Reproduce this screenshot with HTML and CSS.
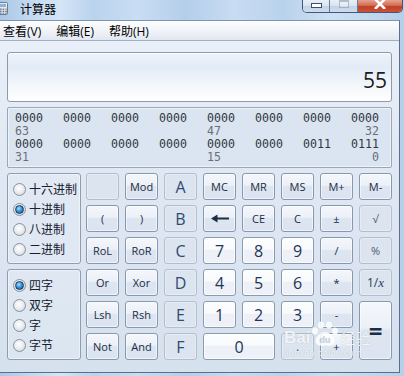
FILE: index.html
```html
<!DOCTYPE html>
<html lang="zh-CN">
<head>
<meta charset="utf-8">
<title>计算器</title>
<link rel="stylesheet" href="styles.css">
</head>
<body>
<div class="window">
  <div class="titlebar">
    <svg class="app-icon" width="8" height="13" viewBox="0 0 8 13">
      <rect x="-4.5" y="0.5" width="12" height="12" rx="1" fill="#e4eaf1" stroke="#6c7d92"/>
      <rect x="-2" y="2" width="8" height="3" fill="#8fb3d9"/>
      <rect x="0" y="6.5" width="1.6" height="1.4" fill="#6f7f93"/>
      <rect x="2.6" y="6.5" width="1.6" height="1.4" fill="#6f7f93"/>
      <rect x="5.2" y="6.5" width="1.6" height="1.4" fill="#e08a3a"/>
      <rect x="0" y="8.6" width="1.6" height="1.4" fill="#6f7f93"/>
      <rect x="2.6" y="8.6" width="1.6" height="1.4" fill="#6f7f93"/>
      <rect x="5.2" y="8.6" width="1.6" height="1.4" fill="#6f7f93"/>
      <rect x="0" y="10.6" width="1.6" height="1.2" fill="#6f7f93"/>
      <rect x="2.6" y="10.6" width="1.6" height="1.2" fill="#6f7f93"/>
      <rect x="5.2" y="10.6" width="1.6" height="1.2" fill="#6f7f93"/>
    </svg>
    <span class="title">计算器</span>
    <div class="caption">
      <div class="cap cap-min"><span class="min-glyph"></span></div>
      <div class="cap cap-max"><span class="max-glyph"></span></div>
      <div class="cap cap-close">
        <svg width="12" height="9" viewBox="0 0 12 9"><path d="M1 -1 L11 9 M11 -1 L1 9" stroke="#fff" stroke-width="2.6" fill="none"/></svg>
      </div>
    </div>
  </div>

  <div class="client">
    <div class="menubar">
      <span class="menu-item">查看(V)</span>
      <span class="menu-item">编辑(E)</span>
      <span class="menu-item">帮助(H)</span>
    </div>

    <div class="display"><span class="value">55</span></div>

    <div class="bits">
      <span>0000</span><span>0000</span><span>0000</span><span>0000</span><span>0000</span><span>0000</span><span>0000</span><span>0000</span>
      <span class="pos">63</span><span class="pos c5">47</span><span class="pos c8">32</span>
      <span>0000</span><span>0000</span><span>0000</span><span>0000</span><span>0000</span><span>0000</span><span>0011</span><span>0111</span>
      <span class="pos">31</span><span class="pos c5">15</span><span class="pos c8">0</span>
    </div>

    <div class="keypad">
      <div class="groups">
        <div class="group">
          <div class="radio-row"><span class="radio"></span><span class="radio-label">十六进制</span></div>
          <div class="radio-row"><span class="radio checked"></span><span class="radio-label">十进制</span></div>
          <div class="radio-row"><span class="radio"></span><span class="radio-label">八进制</span></div>
          <div class="radio-row"><span class="radio"></span><span class="radio-label">二进制</span></div>
        </div>
        <div class="group">
          <div class="radio-row"><span class="radio checked"></span><span class="radio-label">四字</span></div>
          <div class="radio-row"><span class="radio"></span><span class="radio-label">双字</span></div>
          <div class="radio-row"><span class="radio"></span><span class="radio-label">字</span></div>
          <div class="radio-row"><span class="radio"></span><span class="radio-label">字节</span></div>
        </div>
      </div>

      <div class="keys">
        <div class="k dis"></div>
        <div class="k fn">Mod</div>
        <div class="k dis hex">A</div>
        <div class="k fn">MC</div>
        <div class="k fn">MR</div>
        <div class="k fn">MS</div>
        <div class="k fn">M+</div>
        <div class="k fn">M-</div>

        <div class="k fn">(</div>
        <div class="k fn">)</div>
        <div class="k dis hex">B</div>
        <div class="k fn"><svg class="back" width="18" height="9" viewBox="0 0 18 9"><path d="M0 4.5 L6.5 0.5 V3.4 H18 V5.6 H6.5 V8.5 Z" fill="#1c2d45"/></svg></div>
        <div class="k fn">CE</div>
        <div class="k fn">C</div>
        <div class="k fn">±</div>
        <div class="k dis sm">√</div>

        <div class="k fn">RoL</div>
        <div class="k fn">RoR</div>
        <div class="k dis hex">C</div>
        <div class="k num">7</div>
        <div class="k num">8</div>
        <div class="k num">9</div>
        <div class="k fn">/</div>
        <div class="k dis sm">%</div>

        <div class="k fn">Or</div>
        <div class="k fn">Xor</div>
        <div class="k dis hex">D</div>
        <div class="k num">4</div>
        <div class="k num">5</div>
        <div class="k num">6</div>
        <div class="k fn">*</div>
        <div class="k dis inv">1/<i>x</i></div>

        <div class="k fn">Lsh</div>
        <div class="k fn">Rsh</div>
        <div class="k dis hex">E</div>
        <div class="k num">1</div>
        <div class="k num">2</div>
        <div class="k num">3</div>
        <div class="k fn">-</div>
        <div class="k fn eq">=</div>

        <div class="k fn">Not</div>
        <div class="k fn">And</div>
        <div class="k dis hex">F</div>
        <div class="k num zero">0</div>
        <div class="k dis dot">.</div>
        <div class="k fn">+</div>
      </div>
    </div>
  </div>

  <div class="watermark" aria-hidden="true">
    <div class="wm-line">
      <span class="wm-bai">Bai</span>
      <svg class="wm-paw" width="28" height="26" viewBox="0 0 28 26">
        <ellipse cx="4" cy="10" rx="3" ry="3.6" fill="#fff"/>
        <ellipse cx="10" cy="4" rx="3" ry="3.6" fill="#fff"/>
        <ellipse cx="18" cy="4" rx="3" ry="3.6" fill="#fff"/>
        <ellipse cx="24" cy="10" rx="3" ry="3.6" fill="#fff"/>
        <path d="M14 11 C8 11 3 18 5 22 C7 26 12 24 14 24 C16 24 21 26 23 22 C25 18 20 11 14 11Z" fill="#fff"/>
        <text x="14" y="22" text-anchor="middle" font-family="Liberation Sans" font-weight="bold" font-size="9" fill="#c9d4e2">du</text>
      </svg>
      <span class="wm-jy">经验</span>
    </div>
    <div class="wm-url">jingyan.baidu.com</div>
  </div>
</div>
</body>
</html>
```
FILE: styles.css
```css
* { box-sizing: border-box; margin: 0; padding: 0; }
html, body { width: 404px; height: 376px; overflow: hidden; }
body { font-family: "Open Sans", "Noto Sans CJK SC", sans-serif; }

.window {
  position: relative;
  width: 404px;
  height: 376px;
  overflow: hidden;
  background: linear-gradient(90deg, #a9c7e7 0%, #c4daf1 8%, #d4e5f7 15%, #bad3ed 23%, #c9ddf3 34%, #b4ceea 46%, #c8dcf2 58%, #b9d2ec 70%, #cde0f4 82%, #b6cfe9 100%);
}

/* title bar */
.titlebar { height: 20px; display: flex; align-items: flex-start; }
.app-icon { flex: none; margin-top: 2px; }
.title {
  margin-left: 12px;
  margin-top: 1px;
  font-family: "Noto Sans CJK SC", sans-serif;
  font-size: 12px;
  line-height: 16px;
  color: #000;
}
.caption {
  margin-left: auto;
  margin-right: 1px;
  display: flex;
  height: 13px;
  border: 1px solid #42577a;
  border-top: none;
  border-radius: 0 0 5px 5px;
  overflow: hidden;
}
.cap { height: 12px; display: flex; align-items: center; justify-content: center; }
.cap-min, .cap-max {
  width: 28px;
  border-right: 1px solid #6a7e9b;
  background: linear-gradient(#e9eff7 0%, #d8e3f0 50%, #c3d3e6 51%, #cfdcec 100%);
}
.cap-min { width: 27px; }
.cap-close {
  width: 44px;
  background: linear-gradient(#e4a390 0%, #d46b54 45%, #c23d25 55%, #c9533a 100%);
}
.cap-close svg { margin-top: -4px; }
.min-glyph {
  width: 11px; height: 5px;
  margin-top: -1px;
  background: #fff;
  border: 1px solid #3c4f6b;
}
.max-glyph {
  width: 10px; height: 8px;
  margin-top: -5px;
  border: 1px solid rgba(70, 90, 120, 0.35);
  border-top-width: 2px;
  background: rgba(255, 255, 255, 0.25);
}

/* client area */
.client {
  width: 400px;
  height: 353px;
  border-top: 1px solid #8194ad;
  border-right: 1px solid #5d6e87;
  border-bottom: 1px solid #5d6e87;
  background: linear-gradient(#ebf1f9 0%, #e0e8f3 40%, #d6e1ee 100%);
}

.menubar {
  height: 20px;
  border-bottom: 1px solid #a3afbf;
  background: linear-gradient(#fcfdfe 0%, #f1f4f9 50%, #e1e7f1 100%);
  display: flex;
  gap: 15px;
  padding-left: 3px;
  padding-top: 3px;
}
.menu-item { font-size: 12px; line-height: 16px; color: #000; }

.display {
  width: 385px;
  height: 50px;
  margin: 11px 0 0 7px;
  border: 1px solid #8d9aab;
  border-radius: 3px;
  background: linear-gradient(#eef3fa 0%, #e2ebf6 30%, #f2f6fb 65%, #ffffff 100%);
  box-shadow: inset 0 1px 0 #fafcff;
  display: flex;
  justify-content: flex-end;
  align-items: flex-end;
  padding: 0 4px 10px 0;
}
.value { font-size: 21px; line-height: 21px; color: #1d1d1d; }

.bits {
  width: 385px;
  height: 61px;
  margin: 5px 0 0 7px;
  border: 1px solid #99a7b9;
  border-radius: 2px;
  background: #dbe5f1;
  box-shadow: inset 0 0 0 1px #eef3f9;
  padding: 4px 7px;
  display: grid;
  grid-template-columns: repeat(7, 48px) 28px;
  grid-auto-rows: 13px;
  font-family: "DejaVu Sans Mono", monospace;
  font-size: 11.6px;
  line-height: 13px;
  color: #303840;
}
.bits .pos { color: #6a6f76; grid-column: 1; }
.bits .c5 { grid-column: 5; }
.bits .c8 { grid-column: 8; justify-self: end; }

/* keypad */
.keypad { display: flex; margin: 5px 0 0 7px; }
.groups { width: 74px; display: flex; flex-direction: column; gap: 5px; }
.group {
  height: 91px;
  border: 1px solid #8f9daf;
  border-radius: 3px;
  box-shadow: inset 0 0 0 1px rgba(255, 255, 255, 0.45);
  background: rgba(230, 237, 246, 0.35);
  padding: 5px 0 0 5px;
}
.radio-row { height: 20px; display: flex; align-items: center; }
.radio {
  width: 13px; height: 13px;
  border-radius: 50%;
  border: 1px solid #8b939c;
  background: radial-gradient(circle at 45% 40%, #ffffff 0%, #eceef1 45%, #c6ccd3 100%);
  display: flex; align-items: center; justify-content: center;
  flex: none;
}
.radio.checked::after {
  content: "";
  width: 7px; height: 7px;
  border-radius: 50%;
  border: 1px solid #153b63;
  background: radial-gradient(circle at 40% 35%, #a8e0ff 0%, #3b95d6 45%, #13508a 100%);
}
.radio-label {
  margin-left: 3px;
  font-family: "Noto Sans CJK SC", sans-serif;
  font-size: 12px;
  line-height: 14px;
  color: #16202e;
}

.keys {
  margin-left: 5px;
  display: grid;
  grid-template-columns: repeat(8, 33px);
  grid-template-rows: repeat(6, 27px);
  column-gap: 6px;
  row-gap: 5px;
}
.k {
  border-radius: 3px;
  display: flex;
  align-items: center;
  justify-content: center;
  font-size: 11px;
  color: #1c2c44;
}
.fn {
  border: 1px solid #8799b0;
  background: linear-gradient(#f4f7fb 0%, #ecf1f8 45%, #dce5f0 50%, #dbe4f0 100%);
  box-shadow: inset 0 0 0 1px rgba(255, 255, 255, 0.55);
}
.num {
  border: 1px solid #8a9bb1;
  background: linear-gradient(#fdfeff 0%, #f7f9fc 45%, #edf1f7 50%, #eef2f8 100%);
  box-shadow: inset 0 0 0 1px rgba(255, 255, 255, 0.7);
  font-size: 16px;
  color: #1e3556;
}
.dis {
  border: 1px solid #b3bfcd;
  background: #dbe4ef;
  box-shadow: inset 0 0 0 1px rgba(255, 255, 255, 0.3);
}
.hex { font-size: 16px; color: #2e4b72; }
.sm { color: #4b5b70; }
.inv { font-size: 12px; color: #2b3d56; }
.inv i { font-family: "Liberation Serif", serif; font-style: italic; font-size: 13px; }
.dot { font-size: 12px; color: #4b5b70; }
.eq {
  grid-row: span 2;
  font-size: 24px;
  font-weight: 700;
  color: #1c2c44;
}
.zero { grid-column: span 2; }
.back { display: block; }

/* watermark overlay */
.watermark {
  position: absolute;
  left: 284px;
  top: 321px;
  color: rgba(255, 255, 255, 0.85);
  text-shadow: 0 0 1px rgba(110, 125, 145, 0.45);
  pointer-events: none;
}
.wm-line { display: flex; align-items: flex-end; }
.wm-bai { font-family: "Liberation Sans", sans-serif; font-weight: 700; font-size: 17px; line-height: 17px; }
.wm-paw { opacity: 0.85; margin: 0 1px -1px 1px; }
.wm-jy { font-family: "Noto Sans CJK SC", sans-serif; font-size: 15px; line-height: 17px; }
.wm-url { font-family: "Liberation Sans", sans-serif; font-size: 9px; line-height: 11px; margin-top: 2px; letter-spacing: 0.3px; }
```
